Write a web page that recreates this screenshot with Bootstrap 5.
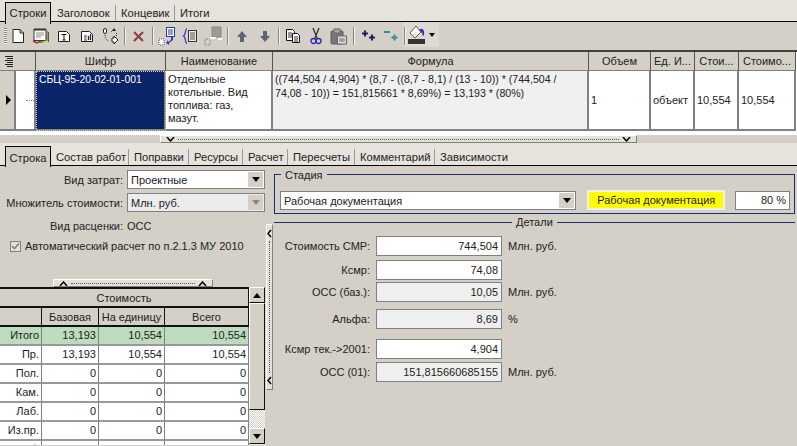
<!DOCTYPE html>
<html lang="ru">
<head>
<meta charset="utf-8">
<title>Строки</title>
<link href="https://cdn.jsdelivr.net/npm/bootstrap@5.3.0/dist/css/bootstrap.min.css" rel="stylesheet">
<style>
html,body{margin:0;height:446px;overflow:hidden}
body{width:797px;background:#d4d0c8;color:#222;font:11px/14px "Liberation Sans",Arial,sans-serif}
svg{display:block}
.tabs{height:22px;background:#e6e3dc;border-bottom:1px solid #000;padding-left:5px;flex-wrap:nowrap}
.tabs.low{height:23px}
.tabs .nav-link{color:#222;padding:0 0 0 5px;height:16px;line-height:16px;margin-top:5px;font-size:11.200px;position:relative;border-right:1px solid #999;white-space:nowrap}
.tabs .nav-link.active{height:22px;margin-top:2px;padding:2px 0 0;background:#d4d0c8;border:1px solid #000;border-bottom:0;line-height:16px;margin-bottom:-1px;color:#222;text-align:center}
.tabs.low .nav-link{margin-top:6px}
.tabs.low .nav-link.active{margin-top:3px;height:21px;padding-top:3px}
.tabs .last{border-right:0}
.toolbar{height:28px;padding-left:6.5px;flex-wrap:nowrap}
.tool{width:23px;height:28px;flex:none;display:flex;align-items:center;justify-content:center}
.sep{width:5.5px;flex:none;height:28px;position:relative}
.sep::after{content:"";position:absolute;left:2px;top:5px;bottom:5px;width:2px;background:#8a877f;border-right:1px solid #f4f2ec}
.grip{position:absolute;left:4px;top:6px;width:3px;height:16px;background:repeating-linear-gradient(#8a877f 0 1px,#f4f2ec 1px 2px)}
.paint{background:#dcd9d2;width:36px;height:25px;margin-left:-5px;justify-content:flex-start;padding-left:5px;gap:3px}
.caret{width:0;height:0;border:3px solid transparent;border-top:4px solid #000;border-bottom:0}
.gridwrap{border-top:2px solid #404040;background:#fff;height:85px;overflow:hidden}
.table.grid{table-layout:fixed;width:796px;margin:0;border-collapse:separate;border-spacing:0;color:#222}
.table.grid>:not(caption)>*>*{border:0;border-right:2px solid #808080;border-bottom:2px solid #808080;padding:0 2px;background:#fff;box-shadow:none;vertical-align:middle;font-size:11px;line-height:13px;color:#222}
.table.grid>thead>tr>th{background:#d4d0c8;font-weight:400;text-align:center;height:19px;white-space:nowrap;overflow:hidden;border-bottom:1px solid #808080;border-right-color:#555;border-right-width:1px}
.table.grid>tbody>tr>td{height:60px}
.table.grid>tbody>tr>td.ind{background:#d4d0c8;padding:0 0 0 6px}
.table.grid>tbody>tr>td.dots{padding:0}
.dotline{width:10px;margin-left:10px;border-top:1px dotted #777}
.table.grid>tbody>tr>td.sel{background:#0a246a;color:#fff;outline:1px dotted #d4d0c8;outline-offset:-1px;vertical-align:top;padding:2px 3px;font-size:10.400px}
.table.grid>tbody>tr>td.formula{background:#f0f0f0;vertical-align:top;padding:2px 2px 0;font-size:10.600px;line-height:13.500px}
.table.grid>tbody>tr>td.name{vertical-align:top;padding:2px 2px 0;font-size:11px}
.hbar{height:8px;position:relative}
.split{background:#e4e1da;border:1px solid #808080;border-top-color:#fff;border-left-color:#fff;display:flex;align-items:center;justify-content:space-between;padding:0 5px}
.split i{flex:1;margin:0 3px;border-top:1px dotted #555}
.hs{width:477px;height:8px;margin-left:160px}
.hs2{width:160px;height:8px;margin-left:53px}
.chev{width:9px;height:5px;flex:none}
.body{height:280px}
.left{width:265px;flex:none}
.frow{height:19px;margin-bottom:4px}
.frow label{width:127px;text-align:right;padding-right:4px;flex:none;white-space:nowrap;font-size:11px}
.combo{width:138px;height:19px;background:#fff;border:1px solid #808080;padding:0 0 0 3px;position:relative;display:flex;align-items:center;font-size:11px;border-radius:0;color:#222}
.combo.off{background:#ececec}
.combo b{position:absolute;right:1px;top:1px;bottom:1px;width:15px;background:#d4d0c8;display:flex;align-items:center;justify-content:center}
.tri{width:0;height:0;border:4px solid transparent;border-top:5px solid #000;border-bottom:0}
.off .tri{border-top-color:#8a877f}
.vid{margin:7px 0 0;height:14px;font-size:11px}
.vid span:first-child{width:127px;text-align:right;padding-right:4px;display:inline-block}
.chk{margin:6px 0 0 10px;height:14px;gap:4px;font-size:11px;white-space:nowrap}
.box{width:11px;height:11px;border:1px solid #808080;background:#e4e1da;flex:none}
.space{height:26px}
.table.cost{table-layout:fixed;width:249px;margin:0;border-collapse:separate;border-spacing:0;color:#222}
.table.cost>:not(caption)>*>*{border:0;border-right:1px solid #808080;border-bottom:2px solid #999;padding:0 2px;height:19px;line-height:16px;background:#fff;box-shadow:none;text-align:right;font-size:11px;color:#222;white-space:nowrap;overflow:hidden}
.table.cost>thead>tr>th{background:#d4d0c8;font-weight:400;text-align:center;border-bottom:2px solid #111;border-right:1px solid #111}
.table.cost>tbody>tr.tot>td{background:#bddbbd}
.costwrap{height:158px;overflow:hidden;border-top:2px solid #111}
.sb{width:16px;flex:none;background:repeating-conic-gradient(#d4d0c8 0 25%,#fff 0 50%) 0 0/2px 2px;height:158px}
.sbb{height:16px;background:#d4d0c8;border:1px solid #111;border-top-color:#fff;border-left-color:#fff;display:flex;align-items:center;justify-content:center}
.up{width:0;height:0;border:4px solid transparent;border-bottom:5px solid #000;border-top:0}
.thumb{height:107px;background:#d4d0c8;border:1px solid #111;border-top-color:#fff;border-left-color:#fff}
.sbb.down{margin-top:18px}
.vs{width:7px;height:166px;margin:58px 0 0 1px;flex-direction:column;padding:4px 0;flex:none}
.vs i{border-top:0;border-left:1px dotted #555;margin:3px 0;flex:1}
.right{width:523px;margin-left:1px;flex:none;font-size:11px}
.stage{height:40px;margin-top:8px;border:1px solid #1a2f6b;position:relative;padding:16px 4px 0 5px;width:521px;gap:11px}
.legend{position:absolute;left:6px;top:-7px;background:#d4d0c8;padding:0 4px;line-height:14px}
.combo.wide{width:297px}
.yellow{width:138px;height:20px;margin-top:-1px;background:#ff0;border:2px solid #efeee8;text-align:center;line-height:16px;margin-right:-1px}
.pct{width:55px;height:19px;background:#fff;border:1px solid #808080;text-align:right;padding-right:3px;line-height:16px}
.det{margin-top:1px;height:14px;width:521px;gap:4px}
.det i{height:1px;background:#1a2f6b;flex:1}
.det i.a{flex:none;width:238px}
.drow{height:20px;margin-top:3px}
.drow label{width:101px;text-align:right;padding-right:5px;flex:none;white-space:nowrap}
.form-control.val{width:126px;height:20px;min-height:0;border:1px solid #808080;border-radius:0;padding:0 3px;text-align:right;font:11px/18px "Liberation Sans",Arial,sans-serif;color:#222;background:#fff;box-shadow:none;flex:none;margin-left:1px;margin-right:6px}
.form-control.val[readonly]{background:#efefef}
.g0{margin-top:7px}.g1{margin-top:7px}.g3{margin-top:10px}.g4{margin-top:4px}.g5{margin-top:2px}
</style>
</head>
<body>
<ul class="nav tabs">
  <li class="nav-item"><a class="nav-link active" href="#" style="width:46px">Строки</a></li>
  <li class="nav-item"><a class="nav-link" href="#" style="margin-left:1px;width:64px">Заголовок</a></li>
  <li class="nav-item"><a class="nav-link" href="#" style="width:59px">Концевик</a></li>
  <li class="nav-item"><a class="nav-link last" href="#">Итоги</a></li>
</ul>
<div class="toolbar d-flex position-relative">
  <div class="grip"></div>
  <div class="tool"><svg width="14" height="16" viewBox="0 0 14 16"><path d="M2 1.500h7l3.500 3.500v9.500h-10.500z" fill="#fff" stroke="#222"/><path d="M9 1.500v3.500h3.500" fill="none" stroke="#222"/></svg></div>
  <div class="tool"><svg width="18" height="18" viewBox="0 0 18 18"><rect x="2" y="2.500" width="12" height="11" fill="#fff" stroke="#333"/><path d="M3 1v3M5 1v3M7 1v3M9 1v3M11 1v3M13 1v3" stroke="#333"/><path d="M4 6h8M4 8h8M4 10h5" stroke="#888"/><path d="M15 4v10M16.500 5v10" stroke="#555"/><path d="M1 14l4 2 3-2" stroke="#b22" fill="none" stroke-width="1.500"/><path d="M7 15h4" stroke="#2a8a2a" stroke-width="1.500"/><path d="M11 15l4-1" stroke="#cc2" stroke-width="1.500"/></svg></div>
  <div class="tool"><svg width="14" height="14" viewBox="0 0 14 14"><path d="M1.500 2.500h8l3 3v7h-11z" fill="#fff" stroke="#222"/><path d="M4.500 5.500h5M7 5.500v5.500M5.500 11h3" stroke="#111" fill="none"/></svg></div>
  <div class="tool"><svg width="14" height="14" viewBox="0 0 14 14"><path d="M1.500 2.500h8l3 3v7h-11z" fill="#fff" stroke="#222"/><path d="M4 7h3M4 9h2.500M4 11h3" stroke="#333"/><path d="M8.500 11V7M10.500 11V5" stroke="#222" stroke-width="1.300"/></svg></div>
  <div class="tool"><svg width="17" height="18" viewBox="0 0 17 18"><rect x="1.500" y="1.500" width="3" height="5" rx="1.500" fill="#fff" stroke="#222"/><path d="M3 8c0 3 1 5 4 6" fill="none" stroke="#333" stroke-dasharray="1 1"/><path d="M9 5l3-3" stroke="#333" stroke-dasharray="1 1"/><path d="M12 1l2 3h-4z" fill="#222"/><path d="M14.500 6v3" stroke="#333" stroke-dasharray="1 1"/><path d="M10 11h2v-2l4 4-4 4v-2h-2z" fill="#fff" stroke="#222"/></svg></div>
  <div class="sep"></div>
  <div class="tool"><svg width="11" height="11" viewBox="0 0 11 11"><path d="M1 1l9 9M10 1l-9 9" stroke="#8e3b3b" stroke-width="2"/></svg></div>
  <div class="sep"></div>
  <div class="tool"><svg width="20" height="20" viewBox="0 0 20 20"><rect x="9.500" y="1.500" width="8" height="9" fill="#fff" stroke="#2b3a94"/><path d="M11 4h5M11 6h5M11 8h5" stroke="#2b3a94"/><path d="M14 11v3l-3 2v-2l-2 3 3 2v-2l4-3v-3z" fill="#3a3ac0"/><path d="M2 13h5v6h-5z" fill="#fff" stroke="#555" stroke-dasharray="1 1"/></svg></div>
  <div class="tool"><svg width="16" height="18" viewBox="0 0 16 18"><path d="M5 1.500C3 1.500 4 8 1.500 9 4 10 3 16.500 5 16.500" fill="none" stroke="#3333cc" stroke-width="1.200"/><rect x="6.500" y="3.500" width="8" height="11" fill="#e8e8e8" stroke="#333"/><path d="M8 6h5M8 8h5M8 10h5M8 12h5" stroke="#555"/></svg></div>
  <div class="tool"><svg width="20" height="20" viewBox="0 0 20 20"><rect x="9" y="1" width="9" height="10" fill="#9a9a9a" stroke="#8a877f"/><path d="M7 12h5M12 12v-1M18 12v1h-3" stroke="#fff" stroke-width="2"/><rect x="2" y="13" width="5" height="6" fill="none" stroke="#777" stroke-dasharray="1 1"/></svg></div>
  <div class="sep"></div>
  <div class="tool"><svg width="12" height="13" viewBox="0 0 12 13"><path d="M6 1l5 6h-3v5h-4v-5h-3z" fill="#5e6570"/></svg></div>
  <div class="tool"><svg width="12" height="13" viewBox="0 0 12 13"><path d="M6 12l5-6h-3v-5h-4v5h-3z" fill="#5e6570"/></svg></div>
  <div class="sep"></div>
  <div class="tool"><svg width="16" height="16" viewBox="0 0 16 16"><path d="M1.500 1.500h6l2 2v9h-8z" fill="#fff" stroke="#111"/><path d="M3 5h4M3 7h4M3 9h4" stroke="#333"/><path d="M7.500 5.500h5l2 2v7h-7z" fill="#fff" stroke="#111"/><path d="M9 9h4M9 11h4M9 13h4" stroke="#333"/></svg></div>
  <div class="tool"><svg width="12" height="18" viewBox="0 0 12 18"><path d="M3 1l4 10M9 1l-4 10" stroke="#333" stroke-width="1.300"/><circle cx="3.500" cy="14" r="2.500" fill="none" stroke="#2b2bb0" stroke-width="1.300"/><circle cx="8.500" cy="14" r="2.500" fill="none" stroke="#2b2bb0" stroke-width="1.300"/></svg></div>
  <div class="tool"><svg width="18" height="17" viewBox="0 0 18 17"><rect x="1" y="3" width="12" height="13" rx="1" fill="#777" stroke="#5f5f5f"/><rect x="4" y="1" width="6" height="4" fill="#aaa" stroke="#666"/><rect x="7.500" y="8" width="9" height="8" fill="#e0e0e0" stroke="#666"/><path d="M9 11h6M9 13h6" stroke="#666"/></svg></div>
  <div class="sep"></div>
  <div class="tool"><svg width="16" height="14" viewBox="0 0 16 14"><path d="M5 1.500v6M2 4.500h6" stroke="#1f1f66" stroke-width="2"/><path d="M12 5.500v6M9 8.500h6" stroke="#1f1f66" stroke-width="2"/></svg></div>
  <div class="tool"><svg width="16" height="14" viewBox="0 0 16 14"><path d="M1 3h6" stroke="#2e8f9e" stroke-width="2"/><path d="M11.500 5.500v6M8.500 8.500h6" stroke="#2e8f9e" stroke-width="2"/></svg></div>
  <div class="sep"></div>
  <div class="tool paint"><svg width="18" height="20" viewBox="0 0 18 20"><path d="M8 1l-6 7 5 5 6-6z" fill="#fff" stroke="#555"/><path d="M11 5c3-3 6 0 5 5 0 1-1.500 1-1.500 0 0-2-1-3-2-3z" fill="#3333cc"/><path d="M5 9l3-2 2 2-3 2z" fill="#f2e6a0"/><rect x="0" y="14" width="17" height="5" fill="#333"/></svg><span class="caret"></span></div>
</div>
<div class="gridwrap">
  <table class="table grid">
    <colgroup><col style="width:16px"><col style="width:20px"><col style="width:130px"><col style="width:107px"><col style="width:316px"><col style="width:62px"><col style="width:44px"><col style="width:44px"><col style="width:57px"></colgroup>
    <thead><tr><th colspan="2" class="text-start"><svg width="10" height="13" viewBox="0 0 10 13" style="margin-left:2px"><path d="M1 1.500h8M3 3.500h6M1 5.500h8M3 7.500h6M1 9.500h8M3 11.500h6" stroke="#222"/></svg></th><th>Шифр</th><th>Наименование</th><th>Формула</th><th>Объем</th><th>Ед. И...</th><th>Стои...</th><th>Стоимо...</th></tr></thead>
    <tbody><tr>
      <td class="ind"><svg width="5" height="10" viewBox="0 0 5 10"><path d="M0 0l5 5-5 5z" fill="#000"/></svg></td>
      <td class="dots"><div class="dotline"></div></td>
      <td class="sel">СБЦ-95-20-02-01-001</td>
      <td class="name">Отдельные котельные. Вид топлива: газ,<br>мазут.</td>
      <td class="formula">((744,504 / 4,904) * (8,7 - ((8,7 - 8,1) / (13 - 10)) * (744,504 /<br>74,08 - 10)) = 151,815661 * 8,69%) = 13,193 * (80%)</td>
      <td>1</td><td>объект</td><td>10,554</td><td>10,554</td>
    </tr></tbody>
  </table>
</div>
<div class="hbar"><div class="split hs"><svg class="chev" viewBox="0 0 9 5"><path d="M1 0l3.500 4 3.500-4" fill="none" stroke="#000" stroke-width="1.500"/></svg><i></i><svg class="chev" viewBox="0 0 9 5"><path d="M1 0l3.500 4 3.500-4" fill="none" stroke="#000" stroke-width="1.500"/></svg></div></div>
<ul class="nav tabs low">
  <li class="nav-item"><a class="nav-link active" href="#" style="width:46px">Строка</a></li>
  <li class="nav-item"><a class="nav-link" href="#" style="width:78px">Состав работ</a></li>
  <li class="nav-item"><a class="nav-link" href="#" style="width:60px">Поправки</a></li>
  <li class="nav-item"><a class="nav-link" href="#" style="width:54px">Ресурсы</a></li>
  <li class="nav-item"><a class="nav-link" href="#" style="width:45px">Расчет</a></li>
  <li class="nav-item"><a class="nav-link" href="#" style="width:67px">Пересчеты</a></li>
  <li class="nav-item"><a class="nav-link" href="#" style="width:80px">Комментарий</a></li>
  <li class="nav-item"><a class="nav-link last" href="#">Зависимости</a></li>
</ul>
<div class="body d-flex">
  <div class="left">
    <div class="frow d-flex align-items-center mt-1"><label>Вид затрат:</label><div class="combo">Проектные<b><span class="tri"></span></b></div></div>
    <div class="frow d-flex align-items-center"><label>Множитель стоимости:</label><div class="combo off">Млн. руб.<b><span class="tri"></span></b></div></div>
    <div class="vid"><span>Вид расценки:</span><span>ОСС</span></div>
    <div class="chk d-flex align-items-center"><span class="box"><svg width="9" height="9" viewBox="0 0 9 9"><path d="M1 4l2.500 2.500L8 1.500" fill="none" stroke="#808080" stroke-width="1.600"/></svg></span><span>Автоматический расчет по п.2.1.3 МУ 2010</span></div>
    <div class="space"></div>
    <div class="split hs2"><svg class="chev" viewBox="0 0 9 5"><path d="M1 5l3.500-4 3.500 4" fill="none" stroke="#000" stroke-width="1.500"/></svg><i></i><svg class="chev" viewBox="0 0 9 5"><path d="M1 5l3.500-4 3.500 4" fill="none" stroke="#000" stroke-width="1.500"/></svg></div>
    <div class="d-flex">
      <div class="costwrap">
        <table class="table cost">
          <colgroup><col style="width:42px"><col style="width:57px"><col style="width:66px"><col style="width:84px"></colgroup>
          <thead>
            <tr><th colspan="4">Стоимость</th></tr>
            <tr><th></th><th>Базовая</th><th>На единицу</th><th>Всего</th></tr>
          </thead>
          <tbody>
            <tr class="tot"><td>Итого</td><td>13,193</td><td>10,554</td><td>10,554</td></tr>
            <tr><td>Пр.</td><td>13,193</td><td>10,554</td><td>10,554</td></tr>
            <tr><td>Пол.</td><td>0</td><td>0</td><td>0</td></tr>
            <tr><td>Кам.</td><td>0</td><td>0</td><td>0</td></tr>
            <tr><td>Лаб.</td><td>0</td><td>0</td><td>0</td></tr>
            <tr><td>Из.пр.</td><td>0</td><td>0</td><td>0</td></tr>
            <tr><td>Об.</td><td>0</td><td>0</td><td>0</td></tr>
          </tbody>
        </table>
      </div>
      <div class="sb">
        <div class="sbb"><span class="up"></span></div>
        <div class="thumb"></div>
        <div class="sbb down"><span class="tri"></span></div>
      </div>
    </div>
  </div>
  <div class="split vs"><svg width="5" height="9" viewBox="0 0 5 9"><path d="M4 1L1 4.500 4 8" fill="none" stroke="#000" stroke-width="1.500"/></svg><i></i><svg width="5" height="9" viewBox="0 0 5 9"><path d="M4 1L1 4.500 4 8" fill="none" stroke="#000" stroke-width="1.500"/></svg></div>
  <div class="right">
    <div class="stage d-flex">
      <span class="legend">Стадия</span>
      <div class="combo wide">Рабочая документация<b><span class="tri"></span></b></div>
      <div class="yellow">Рабочая документация</div>
      <div class="pct">80 %</div>
    </div>
    <div class="det d-flex align-items-center"><i class="a"></i><span>Детали</span><i></i></div>
    <div class="drow d-flex align-items-center g0"><label>Стоимость СМР:</label><input class="form-control val" value="744,504"><span>Млн. руб.</span></div>
    <div class="drow d-flex align-items-center g4"><label>Ксмр:</label><input class="form-control val" value="74,08"></div>
    <div class="drow d-flex align-items-center g5"><label>ОСС (баз.):</label><input class="form-control val" readonly value="10,05"><span>Млн. руб.</span></div>
    <div class="drow d-flex align-items-center g1"><label>Альфа:</label><input class="form-control val" readonly value="8,69"><span>%</span></div>
    <div class="drow d-flex align-items-center g3"><label>Ксмр тек.-&gt;2001:</label><input class="form-control val" value="4,904"></div>
    <div class="drow d-flex align-items-center"><label>ОСС (01):</label><input class="form-control val" readonly value="151,815660685155"><span>Млн. руб.</span></div>
  </div>
</div>
</body>
</html>
